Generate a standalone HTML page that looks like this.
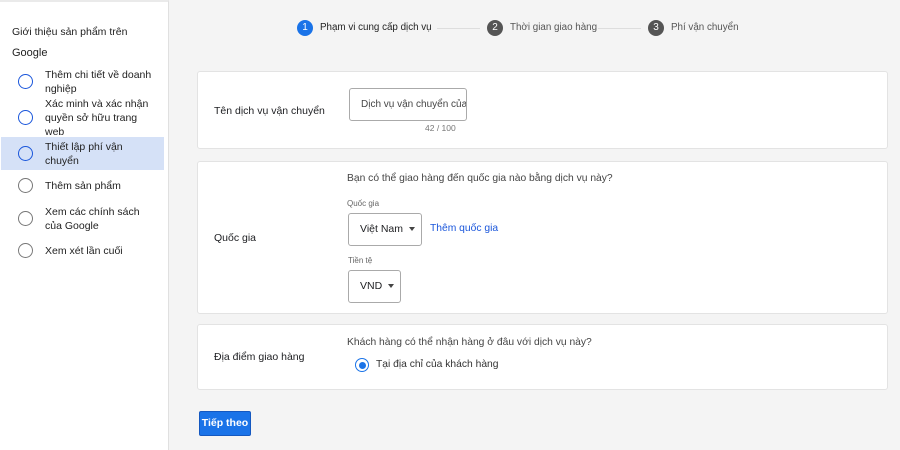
<!DOCTYPE html>
<html><head><meta charset="utf-8"><style>
*{margin:0;padding:0;box-sizing:border-box}
body{width:900px;height:450px;overflow:hidden;background:#f4f4f4;font-family:"Liberation Sans",Arial,sans-serif;color:#202124;position:relative;font-size:11px}
.side{position:absolute;left:0;top:0;width:169px;height:450px;background:#fff;border-right:1px solid #e0e0e0;border-top:2px solid #eaeaea}
.abs{position:absolute}
.circ{position:absolute;width:15px;height:15px;border-radius:50%;border:1.5px solid #1a56db}
.circ.g{border-color:#777}
.st{position:absolute;font-size:10.5px;line-height:14px;color:#222}
.card{position:absolute;left:197px;width:691px;background:#fff;border:1px solid #e3e3e3;border-radius:3px}
.num{position:absolute;width:16px;height:16px;border-radius:50%;color:#fff;font-size:10px;text-align:center;line-height:16px}
.box{position:absolute;border:1px solid #aaa;border-radius:3px;background:#fff;font-size:10.5px}
.tri{display:inline-block;width:0;height:0;border-left:3.5px solid transparent;border-right:3.5px solid transparent;border-top:4px solid #444;vertical-align:middle;margin-left:6px}
</style></head><body>
<div class="side">
<div class="st" style="left:12px;top:23px">Giới thiệu sản phẩm trên</div>
<div class="st" style="left:12px;top:44px;font-size:11px">Google</div>
<div class="circ" style="left:18px;top:72px"></div>
<div class="st" style="left:45px;top:66px">Thêm chi tiết về doanh<br>nghiệp</div>
<div class="circ" style="left:18px;top:108px"></div>
<div class="st" style="left:45px;top:95px">Xác minh và xác nhận<br>quyền sở hữu trang<br>web</div>
<div class="abs" style="left:1px;top:135px;width:163px;height:33px;background:#d5e1f7"></div>
<div class="circ" style="left:18px;top:144px"></div>
<div class="st" style="left:45px;top:138px">Thiết lập phí vận<br>chuyển</div>
<div class="circ g" style="left:18px;top:176px"></div>
<div class="st" style="left:45px;top:177px">Thêm sản phẩm</div>
<div class="circ g" style="left:18px;top:209px"></div>
<div class="st" style="left:45px;top:203px">Xem các chính sách<br>của Google</div>
<div class="circ g" style="left:18px;top:241px"></div>
<div class="st" style="left:45px;top:242px">Xem xét lần cuối</div>
</div>

<div class="num" style="left:297px;top:20px;background:#1a73e8">1</div>
<div class="abs" style="left:320px;top:22px;font-size:9.8px;color:#222">Phạm vi cung cấp dịch vụ</div>
<div class="abs" style="left:437px;top:28px;width:43px;height:1px;background:#ddd"></div>
<div class="num" style="left:487px;top:20px;background:#555">2</div>
<div class="abs" style="left:510px;top:22px;font-size:9.8px;color:#555">Thời gian giao hàng</div>
<div class="abs" style="left:598px;top:28px;width:43px;height:1px;background:#ddd"></div>
<div class="num" style="left:648px;top:20px;background:#555">3</div>
<div class="abs" style="left:671px;top:22px;font-size:9.8px;color:#555">Phí vận chuyển</div>

<div class="card" style="top:71px;height:78px">
<div class="abs" style="left:16px;top:33px;font-size:10.5px">Tên dịch vụ vận chuyển</div>
<div class="box" style="left:151px;top:16px;width:118px;height:33px;line-height:31px;padding-left:11px;overflow:hidden;white-space:nowrap;color:#444;font-size:10px">Dịch vụ vận chuyển của</div>
<div class="abs" style="left:227px;top:51px;font-size:8.5px;color:#777">42 / 100</div>
</div>

<div class="card" style="top:161px;height:153px">
<div class="abs" style="left:149px;top:11px;font-size:10.3px;color:#444">Bạn có thể giao hàng đến quốc gia nào bằng dịch vụ này?</div>
<div class="abs" style="left:149px;top:37px;font-size:8px;color:#666">Quốc gia</div>
<div class="box" style="left:150px;top:51px;width:74px;height:33px;line-height:31px;padding-left:11px">Việt Nam<span class="tri"></span></div>
<div class="abs" style="left:232px;top:61px;font-size:10.3px;color:#1a56db">Thêm quốc gia</div>
<div class="abs" style="left:16px;top:70px;font-size:10.5px">Quốc gia</div>
<div class="abs" style="left:150px;top:94px;font-size:8px;color:#666">Tiền tệ</div>
<div class="box" style="left:150px;top:108px;width:53px;height:33px;line-height:31px;padding-left:11px">VND<span class="tri"></span></div>
</div>

<div class="card" style="top:324px;height:66px">
<div class="abs" style="left:149px;top:12px;font-size:10.3px;color:#444">Khách hàng có thể nhận hàng ở đâu với dịch vụ này?</div>
<div class="abs" style="left:16px;top:26px;font-size:10.5px">Địa điểm giao hàng</div>
<div class="abs" style="left:157px;top:33px;width:14px;height:14px;border-radius:50%;border:1.5px solid #1a73e8"></div>
<div class="abs" style="left:160.5px;top:36.5px;width:7px;height:7px;border-radius:50%;background:#1a73e8"></div>
<div class="abs" style="left:178px;top:34px;font-size:10.3px;color:#333">Tại địa chỉ của khách hàng</div>
</div>

<div class="abs" style="left:199px;top:411px;width:52px;height:25px;background:#1a73e8;border:1px solid #1458c0;border-radius:2px;color:#fff;font-weight:bold;font-size:10.5px;text-align:center;line-height:23px">Tiếp theo</div>
</body></html>
